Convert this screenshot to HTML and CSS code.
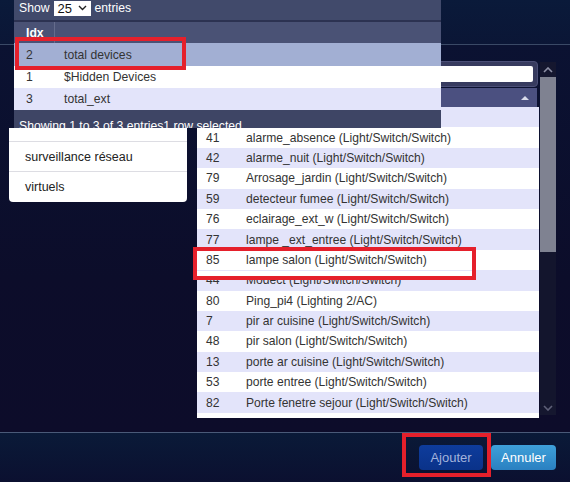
FILE: index.html
```html
<!DOCTYPE html>
<html>
<head>
<meta charset="utf-8">
<link rel="stylesheet" href="styles.css">
</head>
<body>
<div class="modal">
  <div class="modal-header"></div>
  <div class="modal-body">
    <div class="devlist">
      <div class="filter"><input class="search" type="text"></div>
      <div class="dl-head"><span class="sort-up"></span></div>
      <div class="dl-rows">
        <div class="dl-row alt"><span class="id"></span><span class="nm"></span></div>
        <div class="dl-row"><span class="id">41</span><span class="nm">alarme_absence (Light/Switch/Switch)</span></div>
        <div class="dl-row alt"><span class="id">42</span><span class="nm">alarme_nuit (Light/Switch/Switch)</span></div>
        <div class="dl-row"><span class="id">79</span><span class="nm">Arrosage_jardin (Light/Switch/Switch)</span></div>
        <div class="dl-row alt"><span class="id">59</span><span class="nm">detecteur fumee (Light/Switch/Switch)</span></div>
        <div class="dl-row"><span class="id">76</span><span class="nm">eclairage_ext_w (Light/Switch/Switch)</span></div>
        <div class="dl-row alt"><span class="id">77</span><span class="nm">lampe _ext_entree (Light/Switch/Switch)</span></div>
        <div class="dl-row"><span class="id">85</span><span class="nm">lampe salon (Light/Switch/Switch)</span></div>
        <div class="dl-row alt"><span class="id">44</span><span class="nm">Modect (Light/Switch/Switch)</span></div>
        <div class="dl-row"><span class="id">80</span><span class="nm">Ping_pi4 (Lighting 2/AC)</span></div>
        <div class="dl-row alt"><span class="id">7</span><span class="nm">pir ar cuisine (Light/Switch/Switch)</span></div>
        <div class="dl-row"><span class="id">48</span><span class="nm">pir salon (Light/Switch/Switch)</span></div>
        <div class="dl-row alt"><span class="id">13</span><span class="nm">porte ar cuisine (Light/Switch/Switch)</span></div>
        <div class="dl-row"><span class="id">53</span><span class="nm">porte entree (Light/Switch/Switch)</span></div>
        <div class="dl-row alt"><span class="id">82</span><span class="nm">Porte fenetre sejour (Light/Switch/Switch)</span></div>
      </div>
    </div>
    <div class="vscroll">
      <div class="arrow"><svg width="10" height="6" viewBox="0 0 10 6"><path d="M1 5 L5 1 L9 5" fill="none" stroke="#8e90a6" stroke-width="1.6"/></svg></div>
      <div class="thumb"></div>
      <div class="track"></div>
      <div class="arrow"><svg width="10" height="6" viewBox="0 0 10 6"><path d="M1 1 L5 5 L9 1" fill="none" stroke="#5e6078" stroke-width="1.6"/></svg></div>
    </div>
  </div>
  <div class="modal-footer">
    <button class="btn btn-add">Ajouter</button>
    <button class="btn btn-cancel">Annuler</button>
  </div>
</div>

<div class="dt-panel">
  <div class="dt-top">
    <span>Show</span>
    <span class="dt-select">25 <svg width="9" height="6" viewBox="0 0 9 6"><path d="M1 1 L4.5 4.5 L8 1" fill="none" stroke="#222" stroke-width="1.4"/></svg></span>
    <span>entries</span>
  </div>
  <div class="dt-head"><span class="dt-idx">Idx</span></div>
  <div class="dt-row sel"><span class="dt-id">2</span><span>total devices</span></div>
  <div class="dt-row"><span class="dt-id">1</span><span>$Hidden Devices</span></div>
  <div class="dt-row alt"><span class="dt-id">3</span><span>total_ext</span></div>
  <div class="dt-foot">Showing 1 to 3 of 3 entries1 row selected</div>
</div>

<div class="group-menu">
  <div class="gm-item gm-clip"></div>
  <div class="gm-item">surveillance réseau</div>
  <div class="gm-item">virtuels</div>
</div>

<div class="mark mark-dt"></div>
<div class="mark mark-row"></div>
<div class="mark mark-btn"></div>
</body>
</html>
```
FILE: styles.css
```css
* { box-sizing: border-box; margin: 0; padding: 0; }
html, body { width: 570px; height: 482px; overflow: hidden; }
body {
  position: relative;
  background: #0c0f2b;
  font-family: "Liberation Sans", Arial, sans-serif;
  font-size: 12.1px;
  color: #333;
}

.modal { width: 570px; height: 482px; display: flex; flex-direction: column; }
.modal-header {
  flex: none;
  height: 45px;
  border-bottom: 1px solid #3a4966;
  background: linear-gradient(#0a1a3a, #0b1636);
}
.modal-body {
  flex: none;
  height: 387px;
  display: flex;
  align-items: flex-start;
  padding: 16px 0 0 197px;
  background: linear-gradient(#0b1232, #0c0d2a 60%, #0d0c2a);
}

.devlist { width: 342px; display: flex; flex-direction: column; }
.filter {
  height: 26px;
  margin-right: 1px;
  background: #373b5f;
  border: 1px solid #4a4e76;
  border-radius: 4px;
  display: flex;
  align-items: center;
  justify-content: flex-end;
  padding-right: 4px;
}
.search { width: 300px; height: 16px; border: none; border-radius: 2px; background: #fff; }
.dl-head {
  position: relative;
  height: 19px;
  margin-top: 1px;
  margin-right: 2px;
  background: #4b5080;
}
.sort-up {
  position: absolute;
  right: 8px;
  top: 8px;
  border-left: 4px solid transparent;
  border-right: 4px solid transparent;
  border-bottom: 4px solid #d9dbea;
}
.dl-rows { background: #fff; padding-bottom: 5px; }
.dl-row { height: 20.4px; display: flex; align-items: center; white-space: nowrap; }
.dl-row.alt { background: #e3e4fa; }
.id { width: 49px; flex: none; padding-left: 9px; }

.vscroll {
  width: 16px;
  margin: 1px 0 0 1px;
  display: flex;
  flex-direction: column;
}
.arrow { height: 15px; background: #15172f; display: flex; align-items: center; justify-content: center; }
.thumb { height: 175px; background: #7f8291; }
.track { height: 148px; background: #13152d; }

.modal-footer {
  flex: none;
  height: 50px;
  border-top: 1px solid #4a5a78;
  display: flex;
  justify-content: flex-end;
  align-items: flex-start;
  gap: 8px;
  padding: 12px 14px 0 0;
  background: linear-gradient(#0a1a38, #0b1030);
}
.btn {
  height: 25px;
  border: none;
  border-radius: 4px;
  font-family: "Liberation Sans", Arial, sans-serif;
  font-size: 13px;
}
.btn-add { width: 64px; background: linear-gradient(#0e3c9c, #0a3289); color: #a3b3dc; }
.btn-cancel { width: 65px; background: linear-gradient(#3ea0d9, #2a80c1); color: #fff; }

.dt-panel {
  position: absolute;
  left: 14px;
  top: 0;
  width: 427px;
  height: 128px;
  overflow: hidden;
  background: #3e4565;
  color: #333;
  font-size: 12.2px;
}
.dt-top {
  height: 22px;
  display: flex;
  align-items: center;
  gap: 4px;
  padding: 0 0 4px 5px;
  background: #414a6b;
  border-bottom: 2px solid #2c3251;
  color: #fff;
}
.dt-select {
  width: 37px;
  height: 15px;
  background: #fff;
  color: #111;
  font-size: 13px;
  display: flex;
  align-items: center;
  gap: 6px;
  padding-left: 4px;
}
.dt-head { height: 21px; background: #4a5275; display: flex; }
.dt-idx {
  width: 41px;
  border-right: 1px solid #656c8c;
  padding-left: 12px;
  display: flex;
  align-items: center;
  color: #fff;
  font-weight: bold;
}
.dt-row { height: 22px; display: flex; align-items: center; background: #fff; }
.dt-row.sel { height: 23px; background: #a2afd3; }
.dt-row.alt { background: #e3e4fa; }
.dt-id { width: 50px; padding-left: 12px; }
.dt-foot { padding: 9px 0 0 5px; color: #fff; white-space: nowrap; }

.group-menu {
  position: absolute;
  left: 9px;
  top: 128px;
  width: 178px;
  height: 74px;
  overflow: hidden;
  background: #fff;
  border-radius: 0 0 4px 4px;
  color: #222;
  font-size: 12.5px;
}
.gm-item {
  height: 30px;
  display: flex;
  align-items: center;
  padding-left: 16px;
  border-bottom: 1px solid #dddde3;
}
.gm-item:last-child { border-bottom: none; }
.gm-clip { height: 14px; }

.mark { position: absolute; border: 4px solid #e5202b; }
.mark-dt { left: 15px; top: 37px; width: 171px; height: 33px; }
.mark-row {
  left: 193px; top: 247px; width: 283px; height: 33px;
  background: linear-gradient(to top, #fff 5px, transparent 5px);
}
.mark-btn { left: 402px; top: 433px; width: 89px; height: 44px; }
```
